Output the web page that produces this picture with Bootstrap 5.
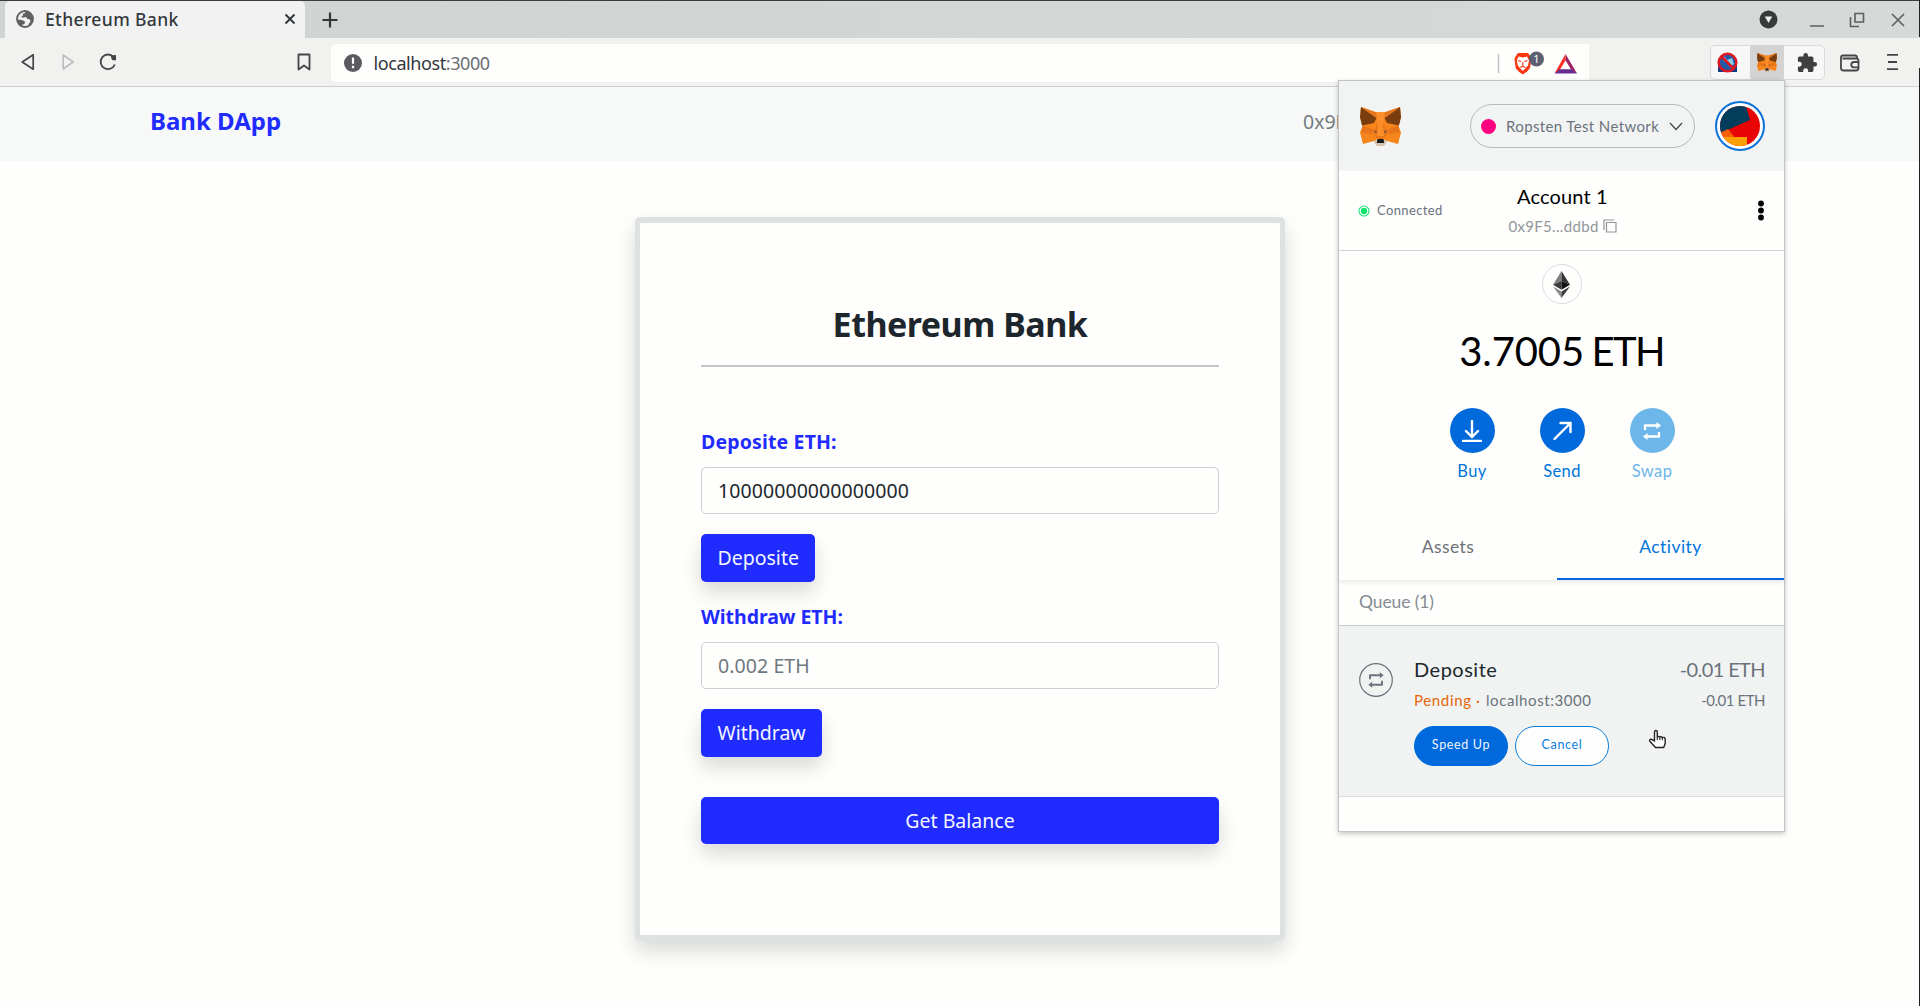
<!DOCTYPE html>
<html lang="en">
<head>
<meta charset="utf-8">
<meta name="viewport" content="width=device-width, initial-scale=1">
<title>Ethereum Bank</title>
<link href="https://cdn.jsdelivr.net/npm/bootstrap@5.3.0/dist/css/bootstrap.min.css" rel="stylesheet">
<style>
:root{--ink:#3c3e3d;--blue:#1f2bff;--mm:#0069dc;--grey:#6a737d}
body{font-family:"Noto Sans",sans-serif;background:#fefefd;height:1006px;overflow:hidden;position:relative;color:#1d262c}
svg{display:block;flex:none}
/* browser frame */
.tabstrip{height:38px;background:linear-gradient(90deg,#cfd4d2,#d5dad8);border-top:1px solid #3a3c40;padding-left:5px}
.tab-active{width:300px;height:37px;background:#f2f2f2;border-radius:5px 5px 0 0;padding:0 8px 2px 11px}
.tab-title{font-size:17.5px;font-weight:500;letter-spacing:.37px;margin-left:11px;color:#33383d;line-height:30px}
.toolbar{height:49px;background:#f1f1f0;border-bottom:1px solid #cfcfcf}
.urlbar{width:1258px;height:38px;background:#fefefd;border-radius:5px 0 0 5px;padding:1px 12px 0 13px}
.urltext{font-size:18px;letter-spacing:-.42px;margin-left:11.500px;color:#32373c;line-height:34px}
.urltext span{color:#6b6f73}
.extbox{width:115px;height:35px;border:1px solid #d9d9d9;border-radius:5px;background:#f7f7f7}
.extfox{width:34px;height:35px;background:#d3d3d3;border-radius:3px}
.edge{position:absolute;right:0;top:68px;bottom:0;width:1px;background:#222}
.edge-top{position:absolute;right:0;top:0;height:37px;width:1px;background:#222}
/* bank page */
.dappbar{height:74px;background:#f7f9f8;padding:0 150px 0 150px}
.dappbar .brand{font-size:24px;font-weight:700;color:var(--blue);line-height:36px;padding-bottom:7px}
.dappbar .addr{width:467px;font-size:19.5px;color:#73797d;line-height:30px;padding-bottom:4px}
.bank{width:650px;height:724px;margin:56px auto 0;border:solid #dee2e2;border-width:6px 5px;border-radius:5px;background:#fefefd;padding:81px 61px 0;box-shadow:0 10px 20px rgba(0,0,0,.15)}
.bank h1{font-size:34px;font-weight:700;line-height:40px;letter-spacing:-.5px;margin:0 0 21px;color:#1d262c}
.rule{height:2px;background:#c5c8c8;margin-bottom:60px}
.bank label{display:block;font-size:19.5px;font-weight:700;color:var(--blue);line-height:30px;letter-spacing:.15px;margin-bottom:10px}
.bank label.tight{letter-spacing:-.05px}
.bank .form-control{height:47px;font-size:19.5px;letter-spacing:.08px;border-color:#cdd0d2;border-radius:5px;padding:0 16px 1px;color:#1d262c;background:#fefefd;margin-bottom:20px}
.bank .form-control::placeholder{color:#6f777e}
.bank .btn{font-size:19.5px;background:var(--blue);color:#f4f6ff;border:0;border-radius:5px;padding:0 16.500px;height:48px;box-shadow:0 10px 20px rgba(0,0,0,.15)}
/* wallet popup */
.wallet{position:absolute;left:1338px;top:80px;width:447px;height:752px;background:#fefefd;border:1px solid #c3c5c5;box-shadow:0 2px 5px rgba(0,0,0,.22);font-family:Lato,sans-serif}
.w-head{height:90px;background:#f2f4f3;padding:0 18px 0 20px}
.w-net{width:225px;height:44px;border:1px solid #b6babc;border-radius:22px;margin-left:68px;padding:0 11px 0 10px;font-size:15px;letter-spacing:.37px;color:var(--grey)}
.w-dot{width:15px;height:15px;border-radius:50%;background:#ff0082;margin-right:10px}
.w-acct{height:80px;border-bottom:1px solid #d3d6d8}
.w-side{width:120px}
.w-conn{font-size:13px;letter-spacing:.38px;color:var(--grey)}
.w-name{font-size:20px;line-height:24px;letter-spacing:.15px;color:#000;margin:13px 0 0 2px}
.w-addr{font-size:15px;line-height:20px;letter-spacing:.33px;color:#929699;margin:8px 0 0 2px}
.w-eth{width:40px;height:40px;border:1px solid #d9dbdb;border-radius:50%;margin:13px auto 0;position:relative}
.w-bal{font-size:40px;line-height:48px;color:#000;margin-top:23px;letter-spacing:-.1px}
.w-bal span{letter-spacing:-1.700px;margin-left:7.500px}
.w-act{width:90px;font-size:16.5px;line-height:20px;color:#0074d9;letter-spacing:.4px}
.w-act i{width:45px;height:45px;border-radius:50%;background:var(--mm);margin-bottom:8px}
.w-act.off{color:#6db6e9}.w-act.off i{background:#6db6e9}
.w-tabs{margin-top:32px;height:67px;font-size:17.5px;letter-spacing:.45px;box-shadow:0 3px 4px rgba(0,0,0,.07);position:relative}
.w-tabs div{line-height:68px;height:67px;color:#6d7276}
.w-tabs .on{color:#0074d9;border-bottom:2px solid var(--mm)}
.w-queue{height:46px;line-height:44px;font-size:17.5px;letter-spacing:-.12px;color:#858b91;padding-left:20px;border-bottom:1px solid #c9cccc}
.w-item{height:171px;background:#f1f3f2;border-bottom:1px solid #dcdede;padding:30px 19px 0 20px}
.w-t1{font-size:20px;line-height:27px;color:#20272d}
.w-t2{font-size:15px;line-height:20px;margin-top:6.500px;color:var(--grey)}
.w-pill{width:94px;height:40px;border-radius:20px;font-size:12.5px;letter-spacing:.65px;border:1px solid #0a7ddb;padding:0 0 2px;line-height:20px}
.w-pill.fill{background:var(--mm);border-color:var(--mm);color:#eef5ff}
.w-pill.line{background:#fefefe;color:#0a7ddb}
.pointer{position:absolute;left:1648px;top:729px}
</style>
</head>
<body>
<svg width="0" height="0" class="position-absolute">
<defs>
<symbol id="fox" viewBox="0 0 41 39">
<path fill="#f6851b" d="M1 0 16 5.200h9L40 0l1 10-2.500 9 2.500 6.500L38 37l-11-3-3 4.500h-7L14 34 3 37 0 25.500 2.500 19 0 10z"/>
<path fill="#e8751a" d="M2.500 19 11 21l3 6-12.500-1zM38.500 19 30 21l-3 6 12.500-1zM14 27l4 5h5l4-5-3-10h-7z"/>
<path fill="#fa8f2a" d="M16 5.200h9l-2 13 1 11h-7l1-11z"/>
<path fill="#7a3d10" d="M1 0 16.500 11 14 16 2 18.500 0 10zM40 0 24.500 11 27 16l12 2.500L41 10z"/>
<path fill="#e4761b" d="M1 0 16 5.200l.5 5.800zM40 0 25 5.200l-.5 5.800z"/>
<path fill="#d4c4b5" d="m14 34 3.500-2h6l3.500 2-3 4.500h-7z"/>
<path fill="#1a1a1a" d="M17.500 32h6l.7 4h-7.400z"/>
<path fill="#cd6116" d="M12 22.500l5 1.500-1 2.500zM29 22.500l-5 1.500 1 2.500z"/>
<path fill="#3c4a66" d="m14 24 3 .7-1 1.300zM27 24l-3 .7 1 1.300z"/>
</symbol>
<symbol id="swap" viewBox="0 0 20 20">
<path d="M3 9V4.500h12M17 11v4.500H5" fill="none" stroke="currentColor" stroke-width="2.300"/>
<path d="M14.500 1v7L19 4.500zM5.500 12v7L1 15.500z" fill="currentColor"/>
</symbol>
</defs>
</svg>

<header>
<div class="tabstrip d-flex">
  <div class="tab-active d-flex align-items-center">
    <svg width="18" height="18" viewBox="0 0 18 18"><circle cx="9" cy="9" r="8" fill="#f2f2f2" stroke="#5f6062" stroke-width="1.800"/><path fill="#5f6062" d="M1.500 9.500 6 10l3 1.500-.5 2.500-2 .500L6 17C3 16 1.300 13 1.500 9.500zM8 1.200c1 .3 1.500 1 .8 2L6.500 4 7 5.500 5 7l2 .7 3-.7 1.500 2 2.500.5.500 2-1.500 2-1 2.500C16 14 17 11 16.500 7.500c-.8-4-4.500-7-8.500-6.300z"/></svg>
    <span class="tab-title">Ethereum Bank</span>
    <svg class="ms-auto" width="14" height="14" viewBox="0 0 14 14"><path d="m2.500 2.500 9 9m0-9-9 9" stroke="#33373a" stroke-width="1.900"/></svg>
  </div>
  <svg style="margin:9.500px 0 0 16px" width="18" height="18" viewBox="0 0 18 18"><path d="M9 1.500v15M1.500 9h15" stroke="#33373a" stroke-width="2.200"/></svg>
  <div class="d-flex ms-auto align-items-center" style="padding-right:14px">
    <svg width="19" height="19" viewBox="0 0 19 19"><circle cx="9.500" cy="9.500" r="9" fill="#363a39"/><path d="M5.800 6.500h7.400l-3.700 6.500z" fill="#eee"/></svg>
    <svg class="ms-4" style="margin-right:21px" width="30" height="18" viewBox="-7 0 30 18"><path d="M1 15h14" stroke="#5a5f5f" stroke-width="1.500"/></svg>
    <svg style="margin-left:-4px" width="16" height="16" viewBox="0 0 16 16"><path d="M6 1.500h8.500V10H6zM1.500 5v9.500H10" fill="none" stroke="#5a5f5f" stroke-width="1.600"/></svg>
    <svg style="margin-left:25px" width="16" height="16" viewBox="0 0 16 16"><path d="m2 2 12 12m0-12L2 14" stroke="#5a5f5f" stroke-width="1.600"/></svg>
  </div>
</div>

<div class="toolbar d-flex align-items-center">
  <svg style="margin-left:20px" width="16" height="18" viewBox="0 0 16 18"><path d="M13.200 1.800v14.400L2.200 9z" fill="none" stroke="#454545" stroke-width="1.700" stroke-linejoin="round"/></svg>
  <svg style="margin-left:25px" width="16" height="18" viewBox="0 0 16 18"><path d="M2.200 2v14l10-7z" fill="none" stroke="#bdbdbd" stroke-width="1.600" stroke-linejoin="round"/></svg>
  <svg style="margin-left:21px" width="20" height="20" viewBox="0 0 20 20"><path d="M16.800 12.500A7.300 7.300 0 1 1 15.500 5" fill="none" stroke="#454545" stroke-width="1.800"/><path d="M12.500 3.500 18 3v5.500l-4-.5z" fill="#454545"/></svg>
  <svg style="margin-left:178px" width="16" height="18" viewBox="0 0 16 18"><path d="M2.500 1.500h11v15L8 12.500l-5.500 4z" fill="none" stroke="#454545" stroke-width="1.800" stroke-linejoin="round"/></svg>
  <div class="urlbar d-flex align-items-center" style="margin:1px 0 0 19px">
    <svg width="18" height="18" viewBox="0 0 18 18"><circle cx="9" cy="9" r="9" fill="#5a5b5e"/><path d="M9 3.500v6.300M9 11.800v2.400" stroke="#fff" stroke-width="2.200"/></svg>
    <span class="urltext">localhost<span>:3000</span></span>
    <svg class="ms-auto" width="80" height="24" viewBox="0 0 80 24">
      <path d="M1.500 3v19" stroke="#bdbdbd" stroke-width="1.300"/>
      <g transform="translate(1.500 0)">
      <path d="M19.500 2h10L32 5.500l1 2.500-1.500 9-3 3.500-4.200 3-4.200-3-3-3.500L16 8l1-2.500z" fill="#f9360f"/>
      <path d="m20 5.500 4.300 1 4.200-1 2 4-1 5-3.200 3.500-2 2-2-2-3-3.500-1-5z" fill="#fff"/>
      <path d="m19.500 9.500 3.200 1M29 9.500l-3.200 1M24.300 11v4m-2.600 1.500 2.600-1.500 2.600 1.500" fill="none" stroke="#f9360f" stroke-width="1.100"/>
      </g>
      <circle cx="39.500" cy="8" r="7.500" fill="#5d6073"/>
      <text x="39.500" y="11.800" font-size="11" font-family="Noto Sans" fill="#fff" text-anchor="middle">1</text>
      <path d="M68.500 3 57.500 22.500l5.200-3.300 5.800-10z" fill="#ff2d24"/><path d="m68.500 3 11.500 19.500-5.500-3.300-6-10z" fill="#9e1f63"/><path d="M57.500 22.500H80l-5.500-4.200H62.700z" fill="#662d91"/>
    </svg>
  </div>
  <div class="extbox d-flex align-items-center" style="margin-left:121px">
    <svg style="margin:0 12px 0 6px" width="21" height="21" viewBox="0 0 21 21"><path d="M1 11h19v9H1z" fill="#123b82"/><circle cx="10.500" cy="10" r="8" fill="#2459a8"/><path d="m7 4 3 4 5-2 2 6-3 2-8-6z" fill="#8fd0e8"/><circle cx="10.500" cy="10.500" r="8.800" fill="none" stroke="#e01620" stroke-width="2.500"/><path d="m4.500 4.500 12 12" stroke="#e01620" stroke-width="2.500"/></svg>
    <div class="extfox d-flex align-items-center justify-content-center"><svg width="20" height="19"><use href="#fox"/></svg></div>
    <svg style="margin-left:13px" width="21" height="21" viewBox="1 0 23 23"><path fill="#3f3f3f" d="M20.500 11H19V7c0-1.100-.9-2-2-2h-4V3.500a2.500 2.500 0 0 0-5 0V5H4c-1.100 0-2 .9-2 2v3.800h1.500a2.700 2.700 0 0 1 0 5.400H2V20c0 1.100.9 2 2 2h3.800v-1.500a2.700 2.700 0 0 1 5.400 0V22H17c1.100 0 2-.9 2-2v-4h1.500a2.500 2.500 0 0 0 0-5z"/></svg>
  </div>
  <svg style="margin:1px 0 0 14px" width="22" height="20" viewBox="0 0 22 20"><path d="M18 6V4.500Q18 2.500 16 2.500H4Q2 2.500 2 4.500V15q0 2.500 2.500 2.500H17q2.500 0 2.500-2.500V7.500Q19.500 5.500 17 5.500H3.500M20 9h-5a2.700 2.700 0 0 0 0 5.400h5" fill="none" stroke="#454545" stroke-width="1.800"/></svg>
  <svg style="margin-left:25px" width="14" height="18" viewBox="0 0 14 18"><path d="M1 1.800h11M2 9h9M1 16.200h11" stroke="#454545" stroke-width="1.800"/></svg>
</div>
</header>

<nav class="dappbar d-flex align-items-center justify-content-between">
  <span class="brand">Bank DApp</span>
  <span class="addr">0x9F5...ddbd</span>
</nav>

<main class="bank">
  <h1 class="text-center">Ethereum Bank</h1>
  <div class="rule"></div>
  <label for="dep">Deposite ETH:</label>
  <input id="dep" class="form-control" value="10000000000000000">
  <button class="btn d-block" style="margin-bottom:20px">Deposite</button>
  <label for="wd" class="tight">Withdraw ETH:</label>
  <input id="wd" class="form-control" placeholder="0.002 ETH">
  <button class="btn d-block" style="margin-bottom:40px">Withdraw</button>
  <button class="btn d-block w-100" style="height:47px">Get Balance</button>
</main>

<section class="wallet">
  <div class="w-head d-flex align-items-center">
    <svg width="43" height="39"><use href="#fox"/></svg>
    <div class="w-net d-flex align-items-center">
      <span class="w-dot"></span><span>Ropsten Test Network</span>
      <svg class="ms-auto" width="14" height="9" viewBox="0 0 14 9"><path d="m1 1 6 6.500L13 1" fill="none" stroke="#444c52" stroke-width="1.400"/></svg>
    </div>
    <svg class="ms-auto" width="52" height="52" viewBox="0 0 52 52">
      <defs><clipPath id="av"><circle cx="26" cy="26" r="20"/></clipPath></defs>
      <circle cx="26" cy="26" r="24" fill="#fefefe" stroke="#0a72da" stroke-width="2"/>
      <g clip-path="url(#av)"><path fill="#e80404" d="M0 0h52v52H0z"/><path fill="#023e5c" d="M0 0h30l6 20L4 34z"/><path fill="#f95f06" d="m6 33 8-4 8 10-14 2z"/><path fill="#fc9f03" d="M4 37h29v12H4z"/></g>
    </svg>
  </div>
  <div class="w-acct d-flex justify-content-between">
    <div class="w-side d-flex align-items-center w-conn" style="padding-left:19px">
      <svg width="12" height="12" viewBox="0 0 12 12" style="margin-right:7px"><circle cx="6" cy="6" r="5" fill="#fff" stroke="#21e37b" stroke-width="1.100"/><circle cx="6" cy="6" r="3.200" fill="#0be56d"/></svg>Connected
    </div>
    <div class="d-flex flex-column align-items-center">
      <div class="w-name">Account 1</div>
      <div class="w-addr d-flex align-items-center">0x9F5...ddbd<svg style="margin-left:4px" width="14" height="14" viewBox="0 0 14 14"><path d="M3.500 3.500h9.500V13H3.500zM1 11V1h10" fill="none" stroke="#8f9499" stroke-width="1.200"/></svg></div>
    </div>
    <div class="w-side d-flex align-items-center justify-content-end" style="padding-right:20px">
      <svg width="6" height="21" viewBox="0 0 6 21"><circle cx="3" cy="3.500" r="2.900"/><circle cx="3" cy="10.500" r="2.900"/><circle cx="3" cy="17.500" r="2.900"/></svg>
    </div>
  </div>
  <div class="w-eth d-flex align-items-center justify-content-center">
    <svg width="17" height="27" viewBox="0 0 17 27"><path fill="#808080" d="M8.500 0 0 13.800 8.500 10z"/><path fill="#343434" d="M8.500 0 17 13.800 8.500 10z"/><path fill="#3c3c3b" d="M8.500 10 0 13.800l8.500 5z"/><path fill="#141414" d="m8.500 10 8.500 3.800-8.500 5z"/><path fill="#8c8c8c" d="m0 15.500 8.500 5V27z"/><path fill="#3c3c3b" d="m17 15.500-8.500 5V27z"/></svg>
  </div>
  <div class="w-bal d-flex justify-content-center">3.7005<span>ETH</span></div>
  <div class="d-flex justify-content-center" style="margin-top:33px;padding-left:1px">
    <div class="w-act d-flex flex-column align-items-center"><i class="d-flex align-items-center justify-content-center"><svg width="20" height="22" viewBox="0 0 20 22"><path d="M10 1v15M4 11l6 6 6-6M1 21h18" fill="none" stroke="#fff" stroke-width="2.400" stroke-linecap="round"/></svg></i>Buy</div>
    <div class="w-act d-flex flex-column align-items-center"><i class="d-flex align-items-center justify-content-center"><svg width="20" height="20" viewBox="0 0 20 20"><path d="M2.500 18 18 2.500M8.500 2H18.500V11" fill="none" stroke="#fff" stroke-width="2.400" stroke-linecap="round"/></svg></i>Send</div>
    <div class="w-act off d-flex flex-column align-items-center"><i class="d-flex align-items-center justify-content-center text-white"><svg width="20" height="20"><use href="#swap"/></svg></i>Swap</div>
  </div>
  <div class="w-tabs d-flex text-center">
    <div style="width:218px">Assets</div><div class="on flex-fill">Activity</div>
  </div>
  <div class="w-queue">Queue (1)</div>
  <div class="w-item d-flex">
    <svg style="margin-top:7px;color:#6a737d" width="34" height="34" viewBox="0 0 34 34"><circle cx="17" cy="17" r="16.300" fill="none" stroke="#6a737d" stroke-width="1.200"/><use href="#swap" x="8.500" y="8.500" width="17" height="17"/></svg>
    <div class="flex-fill" style="margin-left:21px">
      <div class="w-t1 d-flex justify-content-between"><span style="letter-spacing:.5px">Deposite</span><span style="letter-spacing:-.6px;color:#6a737d">-0.01 ETH</span></div>
      <div class="w-t2 d-flex"><span style="letter-spacing:.65px;color:#e5660b;width:72px;white-space:pre">Pending ·</span><span style="letter-spacing:.58px">localhost:3000</span><span class="ms-auto" style="letter-spacing:-.47px">-0.01 ETH</span></div>
      <div class="d-flex" style="margin-top:16.500px;gap:7px"><button class="btn w-pill fill">Speed Up</button><button class="btn w-pill line">Cancel</button></div>
    </div>
  </div>
</section>

<svg class="pointer" width="20" height="21" viewBox="0 0 20 21"><path d="M6.500 12V3.200q0-1.700 1.400-1.700T9.300 3.200V8q1.200-1 2.500 0 1.300-.8 2.500.4 2.700-.4 2.900 1.800v4.300l-1.500 4H7.500L2 12.500q-1-1.800.7-2.300Q4 10 6.500 12z" fill="#fff" stroke="#222" stroke-width="1.400" stroke-linejoin="round"/><path d="M9.300 8v3M11.800 8.300V11M14.300 8.700v2.600" stroke="#222" stroke-width="1.100"/></svg>
<div class="edge-top"></div><div class="edge"></div>
<script src="https://cdn.jsdelivr.net/npm/bootstrap@5.3.0/dist/js/bootstrap.bundle.min.js"></script>
</body>
</html>
